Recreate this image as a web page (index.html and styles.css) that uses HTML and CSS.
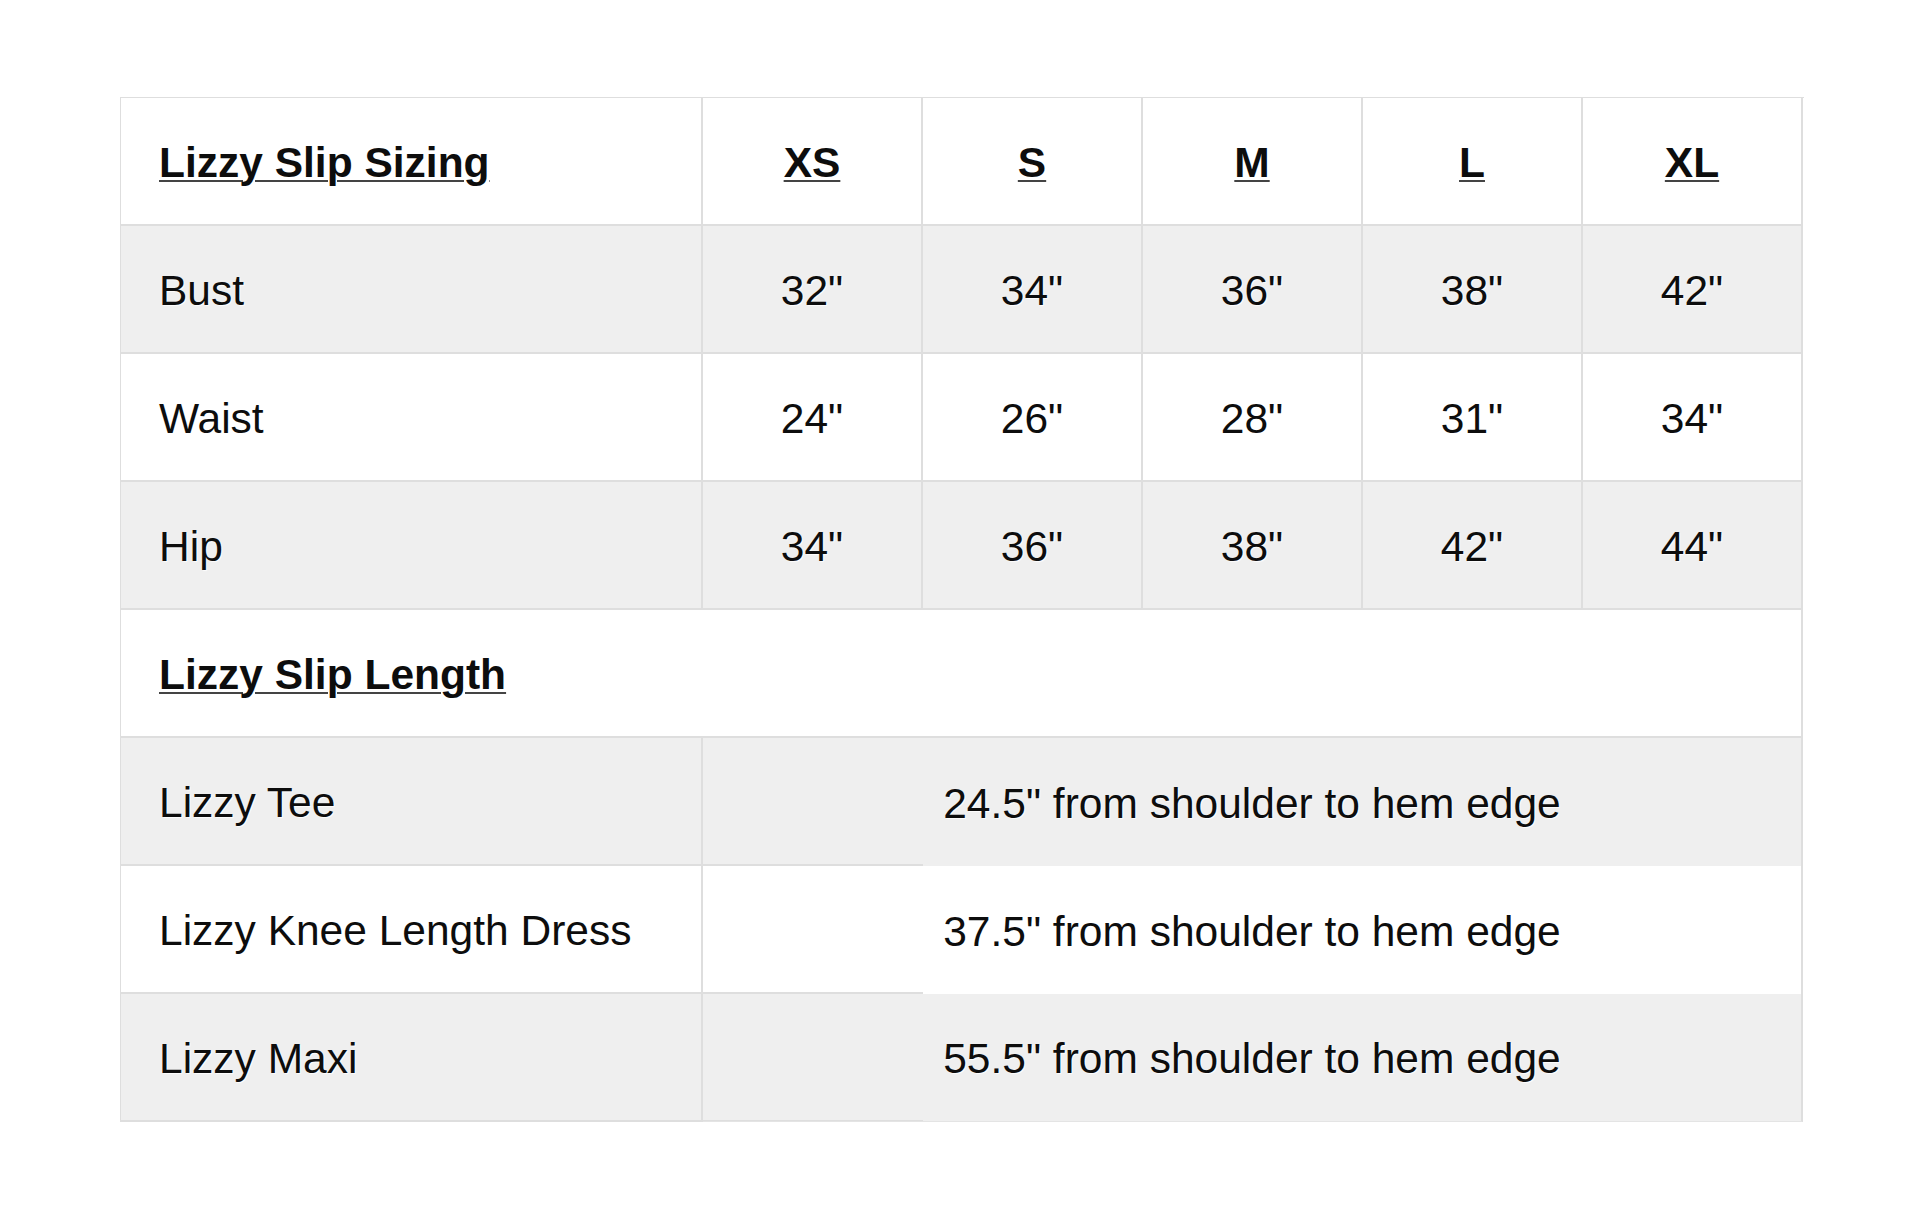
FILE: index.html
```html
<!DOCTYPE html>
<html lang="en">
<head>
<meta charset="utf-8">
<title>Lizzy Slip Sizing</title>
<link rel="stylesheet" href="styles.css">
</head>
<body>
<div class="sheet">
  <div class="cell label head"><span class="u">Lizzy Slip Sizing</span></div>
  <div class="cell size head"><span class="u">XS</span></div>
  <div class="cell size head"><span class="u">S</span></div>
  <div class="cell size head"><span class="u">M</span></div>
  <div class="cell size head"><span class="u">L</span></div>
  <div class="cell size head"><span class="u">XL</span></div>

  <div class="cell label grey">Bust</div>
  <div class="cell size grey">32"</div>
  <div class="cell size grey">34"</div>
  <div class="cell size grey">36"</div>
  <div class="cell size grey">38"</div>
  <div class="cell size grey">42"</div>

  <div class="cell label">Waist</div>
  <div class="cell size">24"</div>
  <div class="cell size">26"</div>
  <div class="cell size">28"</div>
  <div class="cell size">31"</div>
  <div class="cell size">34"</div>

  <div class="cell label grey">Hip</div>
  <div class="cell size grey">34"</div>
  <div class="cell size grey">36"</div>
  <div class="cell size grey">38"</div>
  <div class="cell size grey">42"</div>
  <div class="cell size grey">44"</div>

  <div class="cell label head full"><span class="u">Lizzy Slip Length</span></div>

  <div class="cell label grey">Lizzy Tee</div>
  <div class="cell span grey">24.5" from shoulder to hem edge</div>

  <div class="cell label">Lizzy Knee Length Dress</div>
  <div class="cell span">37.5" from shoulder to hem edge</div>

  <div class="cell label grey last">Lizzy Maxi</div>
  <div class="cell span grey last">55.5" from shoulder to hem edge</div>
</div>
</body>
</html>
```

FILE: styles.css
```css
html, body {
  margin: 0;
  padding: 0;
  background: #ffffff;
}

body {
  font-family: "Liberation Sans", Arial, Helvetica, sans-serif;
  color: #0d0d0d;
}

.sheet {
  margin: 97px 0 0 120px;
  width: 1683px;
  display: grid;
  grid-template-columns: 582px repeat(5, 220px);
  grid-auto-rows: 128px;
  border-top: 1px solid #dedede;
  border-left: 1px solid #dedede;
}

.cell {
  box-sizing: border-box;
  display: flex;
  align-items: center;
  border-right: 2px solid #dedede;
  border-bottom: 2px solid #dedede;
  font-size: 42.5px;
  line-height: 1;
  text-shadow: 1px 1px 1px rgba(255, 255, 255, 0.9);
  background: #ffffff;
}

.grey {
  background-color: #efefef;
}

.label {
  padding-left: 38px;
  padding-top: 4px;
}

.size {
  justify-content: center;
  padding-top: 4px;
}

.head {
  font-weight: bold;
  padding-top: 4px;
}

.u {
  text-decoration: underline;
  text-decoration-thickness: 2px;
  text-underline-offset: 3px;
  text-decoration-color: #444444;
}

.full {
  grid-column: 1 / 7;
}

.span {
  grid-column: 2 / 7;
  justify-content: center;
  padding-top: 4px;
  border-bottom: none;
  background-image: linear-gradient(#dedede, #dedede);
  background-size: 220px 2px;
  background-position: left bottom;
  background-repeat: no-repeat;
}

.span.last {
  border-bottom: 1px solid #e4e4e4;
  background-size: 220px 1px;
}
```
